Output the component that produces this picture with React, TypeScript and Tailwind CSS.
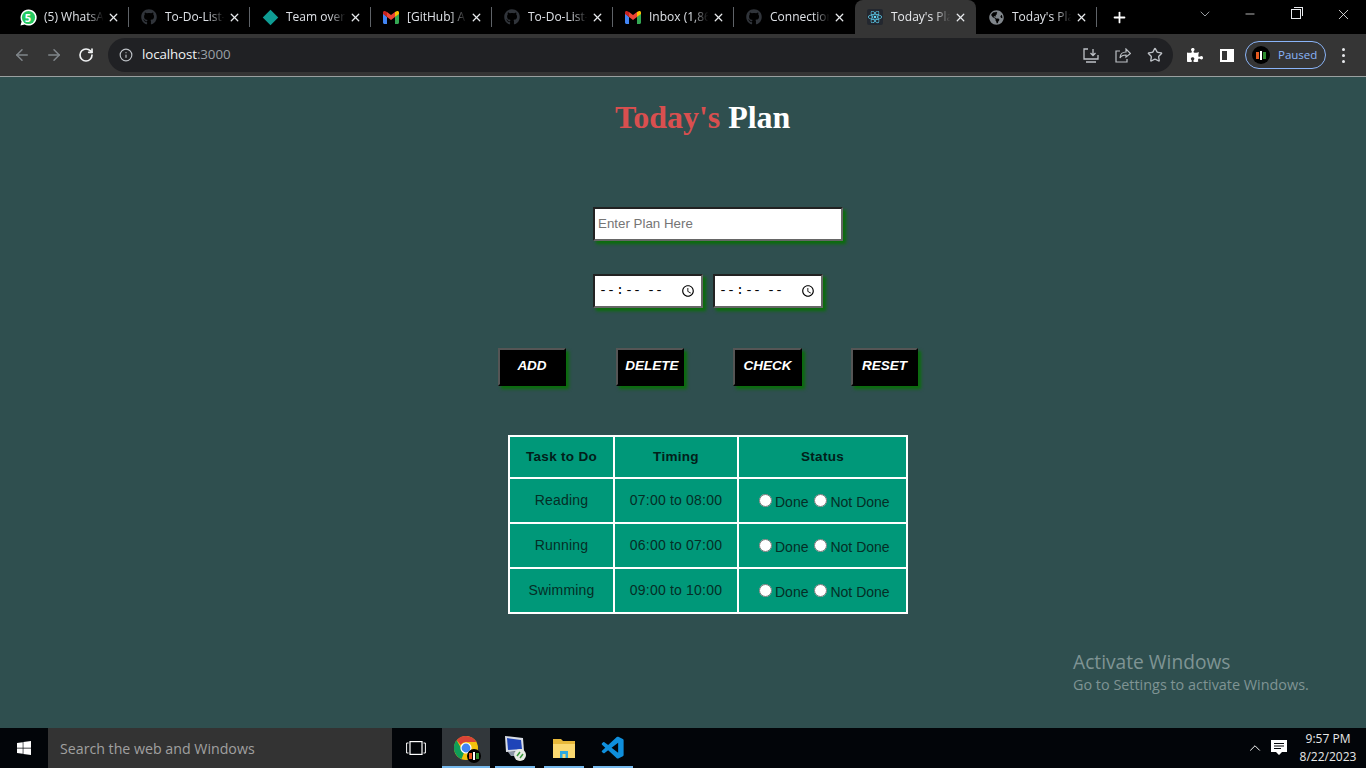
import { ArrowLeft, ArrowRight, RotateCw, Info, X, Plus, ChevronDown, Minus, Star, ChevronUp } from 'lucide-react';
import { FaGithub, FaPuzzlePiece, FaReact, FaGlobeAmericas, FaWindows } from 'react-icons/fa';
import { VscVscode } from 'react-icons/vsc';

const GmailIcon = () => (
  <svg width="16" height="13" viewBox="0 0 16 13">
    <path d="M0 2v9.500C0 12.300.7 13 1.500 13H4V6z" fill="#4285f4" />
    <path d="M16 2v9.500c0 .8-.7 1.500-1.500 1.500H12V6z" fill="#34a853" />
    <path d="M12 1v5l4-3V1.500C16 .2 14.500-.4 13.600.300z" fill="#fbbc04" />
    <path d="M4 6V1l4 3 4-3v5L8 9z" fill="#ea4335" />
    <path d="M0 1.500V3l4 3V1L2.400.300C1.500-.4 0 .2 0 1.500z" fill="#c5221f" />
  </svg>
);

const WhatsappIcon = () => (
  <div className="relative w-4 h-4 flex items-center justify-center">
    <svg width="17" height="17" viewBox="0 0 17 17" className="absolute">
      <path d="M8.500 .5a8 8 0 0 0-6.900 12L.5 16.500l4.100-1.100A8 8 0 1 0 8.500 .5z" fill="white" />
      <circle cx="8.500" cy="8.500" r="6.600" fill="#25c95f" />
    </svg>
    <span className="relative text-[11px] font-bold text-white leading-none">5</span>
  </div>
);

const DiamondIcon = () => <div className="w-[11px] h-[11px] rotate-45 bg-[#0f9d94] mx-[2px]" />;

const ReactBadge = () => (
  <div className="w-4 h-4 bg-[#23272f] rounded-[2px] flex items-center justify-center">
    <FaReact size={14} className="text-[#61dafb]" />
  </div>
);

const tabs = [
  { title: '(5) WhatsA', icon: <WhatsappIcon /> },
  { title: 'To-Do-List-', icon: <FaGithub size={16} className="text-[#30343a]" /> },
  { title: 'Team over', icon: <DiamondIcon /> },
  { title: '[GitHub] A', icon: <GmailIcon /> },
  { title: 'To-Do-List-', icon: <FaGithub size={16} className="text-[#30343a]" /> },
  { title: 'Inbox (1,86', icon: <GmailIcon /> },
  { title: 'Connection', icon: <FaGithub size={16} className="text-[#30343a]" /> },
  { title: "Today's Pla", icon: <ReactBadge />, active: true },
  { title: "Today's Pla", icon: <FaGlobeAmericas size={15} className="text-[#80868b]" /> },
];

function Tab({ title, icon, active, noSep }: { title: string; icon: React.ReactNode; active?: boolean; noSep?: boolean }) {
  return (
    <div className={`relative w-[121px] h-[34px] shrink-0 flex items-center pl-3 pr-[9px] text-[12px] ${active ? 'bg-[#353535] rounded-t-[8px] text-[#e8eaed]' : 'text-[#dee1e6]'}`}>
      <div className="w-4 h-4 shrink-0 flex items-center justify-center">{icon}</div>
      <span className="ml-2 w-[62px] whitespace-nowrap [mask-image:linear-gradient(to_right,black_70%,transparent_96%)]">{title}</span>
      <X size={13} strokeWidth={2.4} className="ml-auto text-[#e8eaed]" />
      {!active && !noSep && <div className="absolute right-0 top-[7px] w-px h-[20px] bg-[#5f6368]" />}
    </div>
  );
}

function TimeInput() {
  return <input type="time" className="w-[110px] h-[34px] bg-white text-black border-2 border-t-[#222] border-l-[#222] border-r-[#666] border-b-[#666] pl-[3px] pr-[3px] text-[13.33px] shadow-[3px_3px_3px_#0a6e0a] [font-family:'Liberation_Mono',monospace]" />;
}

function ActionButton({ label, className }: { label: string; className: string }) {
  return (
    <button className={`h-[38px] pb-[2px] bg-black text-white italic font-bold text-[13.5px] border-2 border-t-[#555] border-l-[#555] border-r-black border-b-black shadow-[3px_3px_3px_#0a6e0a] ${className}`}>
      {label}
    </button>
  );
}

const rows = [
  { task: 'Reading', time: '07:00 to 08:00' },
  { task: 'Running', time: '06:00 to 07:00' },
  { task: 'Swimming', time: '09:00 to 10:00' },
];

function PlanTable() {
  return (
    <table className="w-[400px] ml-[508px] mt-[49px] border-collapse text-[14px] text-[#052e26] tracking-[0.2px] bg-[#009879] table-fixed">
      <thead>
        <tr className="h-[42px] text-[13.5px] tracking-[0.3px] text-[#02201a]">
          <th className="w-[105px] border-2 border-white font-bold">Task to Do</th>
          <th className="w-[124px] border-2 border-white font-bold">Timing</th>
          <th className="border-2 border-white font-bold">Status</th>
        </tr>
      </thead>
      <tbody>
        {rows.map(r => (
          <tr key={r.task} className="h-[45px]">
            <td className="border-2 border-white text-center">{r.task}</td>
            <td className="border-2 border-white text-center">{r.time}</td>
            <td className="border-2 border-white pl-[19px] tracking-normal">
              <div className="flex items-center whitespace-nowrap pt-[4px]">
                <input type="radio" name={r.task} className="w-[13px] h-[13px] ml-[1px] mr-[2px] -mt-[5px] accent-white" />
                <span className="ml-px">Done</span>
                <input type="radio" name={r.task} className="w-[13px] h-[13px] ml-[6px] mr-[2px] -mt-[5px] accent-white" />
                <span className="ml-px">Not Done</span>
              </div>
            </td>
          </tr>
        ))}
      </tbody>
    </table>
  );
}

function ChromeLogo() {
  return (
    <div className="relative w-6 h-6">
      <svg width="24" height="24" viewBox="0 0 24 24">
        <circle cx="12" cy="12" r="12" fill="#f4c20d" />
        <path d="M12 0a12 12 0 0 1 10.400 6H12a6 6 0 0 0-5.200 3L2.600 4.200A12 12 0 0 1 12 0z" fill="#db4437" />
        <path d="M2.600 4.200 7 12a5 5 0 0 0 3 4.800L7.500 23A12 12 0 0 1 2.600 4.200z" fill="#0f9d58" />
        <circle cx="12" cy="12" r="5.600" fill="#fff" />
        <circle cx="12" cy="12" r="4.400" fill="#4285f4" />
      </svg>
      <div className="absolute -right-[3px] -bottom-[3px] w-[14px] h-[14px] rounded-full bg-black flex items-center justify-center gap-px">
        <span className="w-[3px] h-[6px] bg-[#e65a1f]" />
        <span className="w-[2px] h-[8px] bg-white" />
        <span className="w-[3px] h-[6px] bg-[#2e8b2e]" />
      </div>
    </div>
  );
}

function RemoteIcon() {
  return (
    <svg width="24" height="28" viewBox="0 0 24 28">
      <path d="M2 2 20 4 21 17 3 18z" fill="#d8dde6" />
      <path d="M4 4 18 6 19 15 5 16z" fill="#1f44b8" />
      <path d="M5 18 17 18 16 22 8 22z" fill="#8c95a6" />
      <circle cx="17" cy="21" r="6" fill="#e9ebe4" />
      <path d="M14 22 17 18M17 24 20 20" stroke="#3c9a3c" strokeWidth="1.500" />
    </svg>
  );
}

function FolderIcon() {
  return (
    <svg width="24" height="24" viewBox="0 0 24 24">
      <path d="M1 3h8l2 2h12v5H1z" fill="#e8b93a" />
      <path d="M1 8h22v14H1z" fill="#fbd970" />
      <path d="M8 15h8v7h-2.500v-4h-3v4H8z" fill="#2fa9e0" />
    </svg>
  );
}

function TaskbarItem({ children, active, className }: { children: React.ReactNode; active?: boolean; className: string }) {
  return (
    <div className={`h-10 pt-[2px] flex items-center justify-center border-b-2 border-[#76b9ed] ${active ? 'bg-[#32373b]' : ''} ${className}`}>
      {children}
    </div>
  );
}

export default function App() {
  return (
    <div className="relative w-[1366px] h-[768px] overflow-hidden flex flex-col bg-[#2f4f4f] [font-family:'Liberation_Sans',Arial,sans-serif]">
      {/* tab strip */}
      <div className="h-[34px] shrink-0 bg-black flex items-center pl-2 [font-family:'Open_Sans','Noto_Sans',sans-serif]">
        {tabs.map((t, i) => <Tab key={i} title={t.title} icon={t.icon} active={t.active} noSep={i === 6} />)}
        <Plus size={17} strokeWidth={2.5} className="ml-[14px] text-white" />
        <ChevronDown size={16} strokeWidth={1.2} className="ml-[69px] -mt-[6px] text-[#bdc1c6]" />
        <Minus size={14} strokeWidth={1.2} className="ml-[30px] -mt-[6px] text-white" />
        <div className="ml-[34px] -mt-[6px] relative w-[10px] h-[10px] border border-[#e8eaed] before:content-[''] before:absolute before:-top-[3px] before:-right-[3px] before:w-[9px] before:h-[9px] before:border-t before:border-r before:border-[#e8eaed]" />
        <X size={17} strokeWidth={1.1} className="ml-[34px] -mt-[6px] text-white" />
      </div>

      {/* toolbar */}
      <div className="h-[43px] shrink-0 bg-[#353535] border-b border-[#9aa0a0] flex items-center">
        <ArrowLeft size={18} className="ml-[13px] text-[#80868b]" />
        <ArrowRight size={18} className="ml-[14px] text-[#80868b]" />
        <RotateCw size={16} strokeWidth={2.5} className="ml-[15px] text-[#f1f3f4]" />
        <div className="ml-[14px] w-[1065px] h-[34px] rounded-full bg-[#202124] flex items-center">
          <Info size={14} className="ml-[11px] text-[#bdc1c6]" />
          <span className="ml-[9px] pb-px text-[13.33px] tracking-[-0.1px] text-[#f1f3f4] [font-family:'Open_Sans',sans-serif]">localhost<span className="text-[#9aa0a6]">:3000</span></span>
          <svg width="16" height="15" viewBox="0 0 16 15" className="ml-auto text-[#bdc1c6]" fill="none" stroke="currentColor" strokeWidth="1.300">
            <path d="M5 1H1v10h14V7M3 14h10M10 1v6M7.500 5 10 7.500 12.500 5" />
          </svg>
          <svg width="16" height="15" viewBox="0 0 16 15" className="ml-[16px] text-[#bdc1c6]" fill="none" stroke="currentColor" strokeWidth="1.200">
            <path d="M5 3H1v11h11v-3M5 10c0-4 3-6 6-6V1l4.500 4.500L11 9V7c-3 0-5 1-6 3z" />
          </svg>
          <Star size={16} className="ml-[16px] mr-[10px] text-[#bdc1c6]" />
        </div>
        <FaPuzzlePiece size={16} className="ml-[14px] text-white" />
        <div className="ml-[17px] w-[14px] h-[13px] border-2 border-white flex justify-end"><div className="w-[5px] h-full bg-white" /></div>
        <div className="ml-[11px] w-[81px] h-[28px] rounded-full border border-[#8ab4f8] flex items-center pl-[6px]">
          <div className="w-[18px] h-[18px] rounded-full bg-black flex items-center justify-center gap-px">
            <span className="w-[3px] h-[7px] bg-[#e65a1f]" />
            <span className="w-[2px] h-[9px] bg-white" />
            <span className="w-[3px] h-[7px] bg-[#2e8b2e]" />
          </div>
          <span className="ml-2 text-[11.5px] text-[#8ab4f8] [font-family:'Open_Sans',sans-serif]">Paused</span>
        </div>
        <div className="ml-4 flex flex-col gap-[3px]">
          <span className="w-[3px] h-[3px] rounded-full bg-[#e8eaed]" />
          <span className="w-[3px] h-[3px] rounded-full bg-[#e8eaed]" />
          <span className="w-[3px] h-[3px] rounded-full bg-[#e8eaed]" />
        </div>
      </div>

      {/* page */}
      <div className="flex-1">
        <h1 className="ml-[615px] mt-[22px] h-[37px] text-[32px] leading-[37px] font-bold whitespace-nowrap tracking-[-0.05px] [font-family:'Liberation_Serif',serif] text-[#d94f4f]">
          Today's <span className="text-white">Plan</span>
        </h1>
        <input
          placeholder="Enter Plan Here"
          className="block ml-[593px] mt-[71px] w-[250px] h-[34px] px-[3px] pb-[2px] bg-white text-[13.33px] border-2 border-t-[#222] border-l-[#222] border-r-[#666] border-b-[#666] placeholder:text-[#757575] shadow-[3px_3px_3px_#0a6e0a]"
        />
        <div className="ml-[593px] mt-[33px] flex gap-[10px]">
          <TimeInput />
          <TimeInput />
        </div>
        <div className="ml-[498px] mt-[40px] flex">
          <ActionButton label="ADD" className="w-[68px]" />
          <ActionButton label="DELETE" className="w-[68px] ml-[50px] pl-[4px]" />
          <ActionButton label="CHECK" className="w-[69px] ml-[49px]" />
          <ActionButton label="RESET" className="w-[67px] ml-[49px]" />
        </div>
        <PlanTable />
      </div>

      {/* watermark */}
      <div className="absolute left-[1073px] top-[649px] text-[#7f9494] [font-family:'Open_Sans','Noto_Sans',sans-serif]">
        <div className="text-[19.200px] leading-[26px]">Activate Windows</div>
        <div className="text-[14.400px] leading-[20px] whitespace-nowrap">Go to Settings to activate Windows.</div>
      </div>

      {/* taskbar */}
      <div className="h-10 shrink-0 bg-[#020509] flex items-center text-white [font-family:'Open_Sans','Noto_Sans',sans-serif]">
        <div className="w-12 flex justify-center"><FaWindows size={16} /></div>
        <div className="w-[344px] h-10 pt-px bg-[#333333] flex items-center pl-3 text-[14.200px] text-[#a0a0a0]">Search the web and Windows</div>
        <svg width="20" height="14" viewBox="0 0 20 14" fill="none" stroke="white" strokeWidth="1.200" className="ml-[14px]">
          <rect x="4" y="0.600" width="12" height="12.800" />
          <path d="M2.500 2H.6v10h1.900M17.500 2h1.900v10h-1.900" strokeWidth="1" />
        </svg>
        <TaskbarItem active className="w-12 ml-4"><ChromeLogo /></TaskbarItem>
        <TaskbarItem className="w-10 ml-[5px]"><RemoteIcon /></TaskbarItem>
        <TaskbarItem className="w-10 ml-[9px]"><FolderIcon /></TaskbarItem>
        <TaskbarItem className="w-10 ml-[9px]"><VscVscode size={27} className="text-[#0f8fdc]" /></TaskbarItem>
        <ChevronUp size={18} strokeWidth={1.3} className="ml-[613px] text-white" />
        <svg width="16" height="16" viewBox="0 0 16 16" className="ml-[7px]">
          <path d="M0 0h16v12h-5l-3 3-3-3H0z" fill="white" />
          <path d="M3 3.500h10M3 6h10M3 8.500h7" stroke="#020509" strokeWidth="1" />
        </svg>
        <div className="ml-[7px] w-[68px] text-center text-[12px] leading-[18px] text-[#e8e8e8]">
          <div>9:57 PM</div>
          <div>8/22/2023</div>
        </div>
      </div>
    </div>
  );
}
